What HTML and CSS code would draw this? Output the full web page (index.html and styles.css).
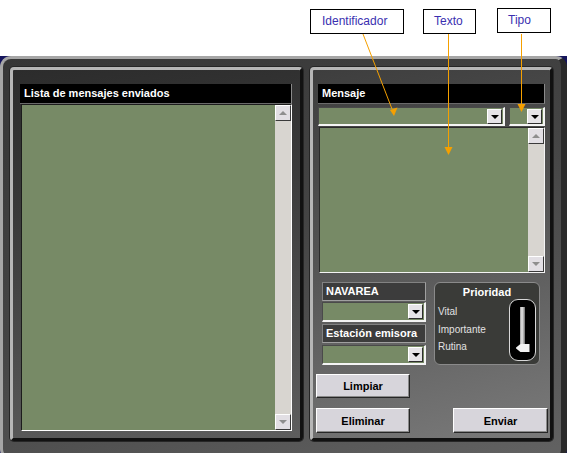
FILE: index.html
```html
<!DOCTYPE html>
<html lang="es">
<head>
<meta charset="utf-8">
<title>Mensajes</title>
<link rel="stylesheet" href="styles.css">
</head>
<body>
<div class="stage">
  <div class="note note-id">Identificador</div>
  <div class="note note-texto">Texto</div>
  <div class="note note-tipo">Tipo</div>
  <svg class="arrows" width="567" height="453" viewBox="0 0 567 453">
    <g stroke="#f5a000" stroke-width="1" fill="none">
      <line x1="363" y1="34" x2="392" y2="109"/>
      <line x1="448.5" y1="34" x2="448.5" y2="148"/>
      <line x1="521.5" y1="34" x2="521.5" y2="105"/>
    </g>
    <g fill="#f5a000">
      <polygon points="394,116 397.5,107.5 390,110"/>
      <polygon points="444.5,147 452.5,147 448.5,155"/>
      <polygon points="517.5,104 525.5,104 521.5,112"/>
    </g>
  </svg>
  <div class="window">
    <div class="frame">
      <section class="panel panel-left">
        <div class="titlebar">Lista de mensajes enviados</div>
        <div class="listbox">
          <div class="green"></div>
          <div class="vscroll">
            <div class="sbtn up"></div>
            <div class="strack"></div>
            <div class="sbtn down"></div>
          </div>
        </div>
      </section>
      <section class="panel panel-right">
        <div class="titlebar">Mensaje</div>
        <div class="combo-row">
          <div class="combo combo-id"><div class="dd"></div></div>
          <div class="combo combo-tipo"><div class="dd"></div></div>
        </div>
        <div class="textbox">
          <div class="green"></div>
          <div class="vscroll">
            <div class="sbtn up"></div>
            <div class="strack"></div>
            <div class="sbtn down"></div>
          </div>
        </div>
        <div class="lower">
          <div class="lower-left">
            <div class="label">NAVAREA</div>
            <div class="combo combo-sm"><div class="dd"></div></div>
            <div class="label label-gap">Estación emisora</div>
            <div class="combo combo-sm combo-gap"><div class="dd"></div></div>
          </div>
          <div class="prioridad">
            <div class="prio-title">Prioridad</div>
            <div class="prio-body">
              <div class="prio-labels">
                <span>Vital</span>
                <span>Importante</span>
                <span>Rutina</span>
              </div>
              <div class="slider">
                <div class="slider-track"></div>
                <div class="slider-thumb"></div>
              </div>
            </div>
          </div>
        </div>
        <div class="btn-row">
          <button class="btn">Limpiar</button>
        </div>
        <div class="btn-row btn-row-split">
          <button class="btn">Eliminar</button>
          <button class="btn btn-wide">Enviar</button>
        </div>
      </section>
    </div>
  </div>
</div>
</body>
</html>
```
FILE: styles.css
```css
* { box-sizing: border-box; }

body {
  margin: 0;
  background: #ffffff;
  font-family: "Liberation Sans", Arial, sans-serif;
}

.stage {
  position: relative;
  width: 567px;
  height: 453px;
  overflow: hidden;
  background: #ffffff;
}

/* annotations */
.note {
  position: absolute;
  top: 9px;
  height: 25px;
  border: 1px solid #000;
  background: #fff;
  color: #3a2fb0;
  font-size: 12px;
  line-height: 22px;
  z-index: 3;
}
.note-id { left: 310px; width: 94px; padding-left: 11px; }
.note-texto { left: 423px; width: 53px; padding-left: 10px; }
.note-tipo { left: 497px; width: 54px; padding-left: 10px; top: 8px; }

.arrows {
  position: absolute;
  left: 0;
  top: 0;
  z-index: 4;
  pointer-events: none;
}

/* window frame */
.window {
  margin-top: 56px;
  height: 397px;
  background: #15155c;
}

.frame {
  width: 567px;
  height: 404px;
  border-radius: 11px;
  border-style: solid;
  border-width: 3px 6px 3px 3px;
  border-color: #a6a6a6 #2a2a2a #1e1e1e #a6a6a6;
  background: linear-gradient(160deg, #363636 0%, #444 45%, #626262 100%);
  display: flex;
  gap: 7px;
  padding: 8px 8px 0 7px;
}

.panel {
  height: 374px;
  border: 3px solid;
  border-color: #b6b6b6 #111 #111 #b6b6b6;
  border-radius: 4px;
  box-shadow: 0 0 0 1px #262626;
}

.panel-left {
  width: 293px;
  background: linear-gradient(170deg, #2c2c2c 0%, #3a3a3a 35%, #5e5e5e 100%);
  padding: 14px 8px 0 7px;
}

.panel-right {
  width: 243px;
  background: linear-gradient(165deg, #3e3e3e 0%, #545454 45%, #7a7a7a 100%);
  padding: 14px 5px 0 5px;
}

.titlebar {
  height: 20px;
  background: #000;
  color: #fff;
  font-weight: bold;
  font-size: 11px;
  line-height: 19px;
  padding-left: 4px;
  border-right: 1px solid #8a8a8a;
  border-bottom: 1px solid #6a6a6a;
}

.green { flex: 1; background: #778a66; }

.listbox {
  display: flex;
  height: 327px;
  margin-left: 1px;
  border-style: solid;
  border-width: 1px;
  border-color: #1c1c1c #fff #fff #1c1c1c;
}

.vscroll {
  width: 16px;
  display: flex;
  flex-direction: column;
  background: #d8d5d0;
}

.strack { flex: 1; }

.sbtn {
  height: 16px;
  background: #e2dfe4;
  border: 1px solid;
  border-color: #fff #3a3a3a #3a3a3a #fff;
  display: flex;
  align-items: center;
  justify-content: center;
}
.sbtn::after {
  content: "";
  width: 0;
  height: 0;
  border-left: 4px solid transparent;
  border-right: 4px solid transparent;
}
.sbtn.up::after { border-bottom: 4px solid #8e8e8e; }
.sbtn.down::after { border-top: 4px solid #8e8e8e; }

/* combos */
.combo-row {
  display: flex;
  gap: 4px;
  margin-top: 3px;
  height: 19px;
}

.combo {
  display: flex;
  justify-content: flex-end;
  align-items: center;
  background: #778a66;
  border-style: solid;
  border-width: 1px 2px 2px 1px;
  border-color: #4a4a4a #f4f4f4 #f4f4f4 #4a4a4a;
  padding-right: 1px;
}
.combo-id { width: 187px; }
.combo-tipo { width: 36px; }

.dd {
  width: 15px;
  height: 15px;
  background: #e6e4e8;
  border: 1px solid;
  border-color: #fff #2e2e2e #2e2e2e #fff;
  display: flex;
  align-items: center;
  justify-content: center;
}
.dd::after {
  content: "";
  width: 0;
  height: 0;
  border-left: 4px solid transparent;
  border-right: 4px solid transparent;
  border-top: 4px solid #000;
  margin-top: 1px;
}

.textbox {
  display: flex;
  margin-top: 1px;
  height: 146px;
  margin-left: 1px;
  border-style: solid;
  border-width: 1px;
  border-color: #2a2a2a #f4f4f4 #f4f4f4 #2a2a2a;
  width: 226px;
}

/* lower section */
.lower {
  display: flex;
  gap: 8px;
  margin-top: 9px;
  height: 83px;
  padding-left: 4px;
}

.lower-left {
  width: 104px;
  display: flex;
  flex-direction: column;
}

.label {
  height: 19px;
  background: #3c3c3c;
  border: 1px solid;
  border-color: #828282 #a0a0a0 #a0a0a0 #828282;
  color: #fff;
  font-weight: bold;
  font-size: 11px;
  line-height: 17px;
  padding-left: 3px;
}
.label-gap { margin-top: 2px; }

.combo-sm {
  height: 20px;
  margin-top: 1px;
}
.combo-gap { margin-top: 2px; }

.prioridad {
  width: 106px;
  height: 83px;
  background: #3a3b38;
  border: 1px solid #8a8a8a;
  border-radius: 6px;
  display: flex;
  flex-direction: column;
}

.prio-title {
  height: 16px;
  line-height: 18px;
  text-align: center;
  color: #fff;
  font-weight: bold;
  font-size: 11px;
}

.prio-body {
  display: flex;
  justify-content: space-between;
  padding: 0 3px 0 3px;
}

.prio-labels {
  display: flex;
  flex-direction: column;
  padding-top: 4px;
  color: #e2e2e2;
  font-size: 10px;
  line-height: 17.5px;
}

.slider {
  width: 27px;
  height: 62px;
  background: #000;
  border: 1px solid #d8d8d8;
  border-radius: 9px;
  display: flex;
  flex-direction: column;
  align-items: center;
  padding-top: 7px;
}

.slider-track {
  width: 5px;
  height: 37px;
  background: linear-gradient(90deg, #9a9a9a 0%, #e8e8e8 40%, #b0b0b0 70%, #6a6a6a 100%);
}

.slider-thumb {
  width: 14px;
  height: 8px;
  background: #f2f2f2;
  clip-path: polygon(0 50%, 35% 0, 100% 0, 100% 100%, 35% 100%);
}

/* buttons */
.btn-row {
  display: flex;
  margin-left: -2px;
  margin-top: 9px;
}
.btn-row-split {
  margin-top: 10px;
  width: 232px;
  justify-content: space-between;
}

.btn {
  width: 94px;
  height: 24px;
  margin: 0;
  padding: 0;
  background: #d7d5db;
  border: 1px solid;
  border-color: #fff #262626 #262626 #fff;
  box-shadow: inset -1px -1px 0 #8a8a8a;
  color: #000;
  font-family: "Liberation Sans", Arial, sans-serif;
  font-weight: bold;
  font-size: 11px;
}
.btn-row-split .btn { height: 25px; }
.btn-wide { width: 95px; }
```
